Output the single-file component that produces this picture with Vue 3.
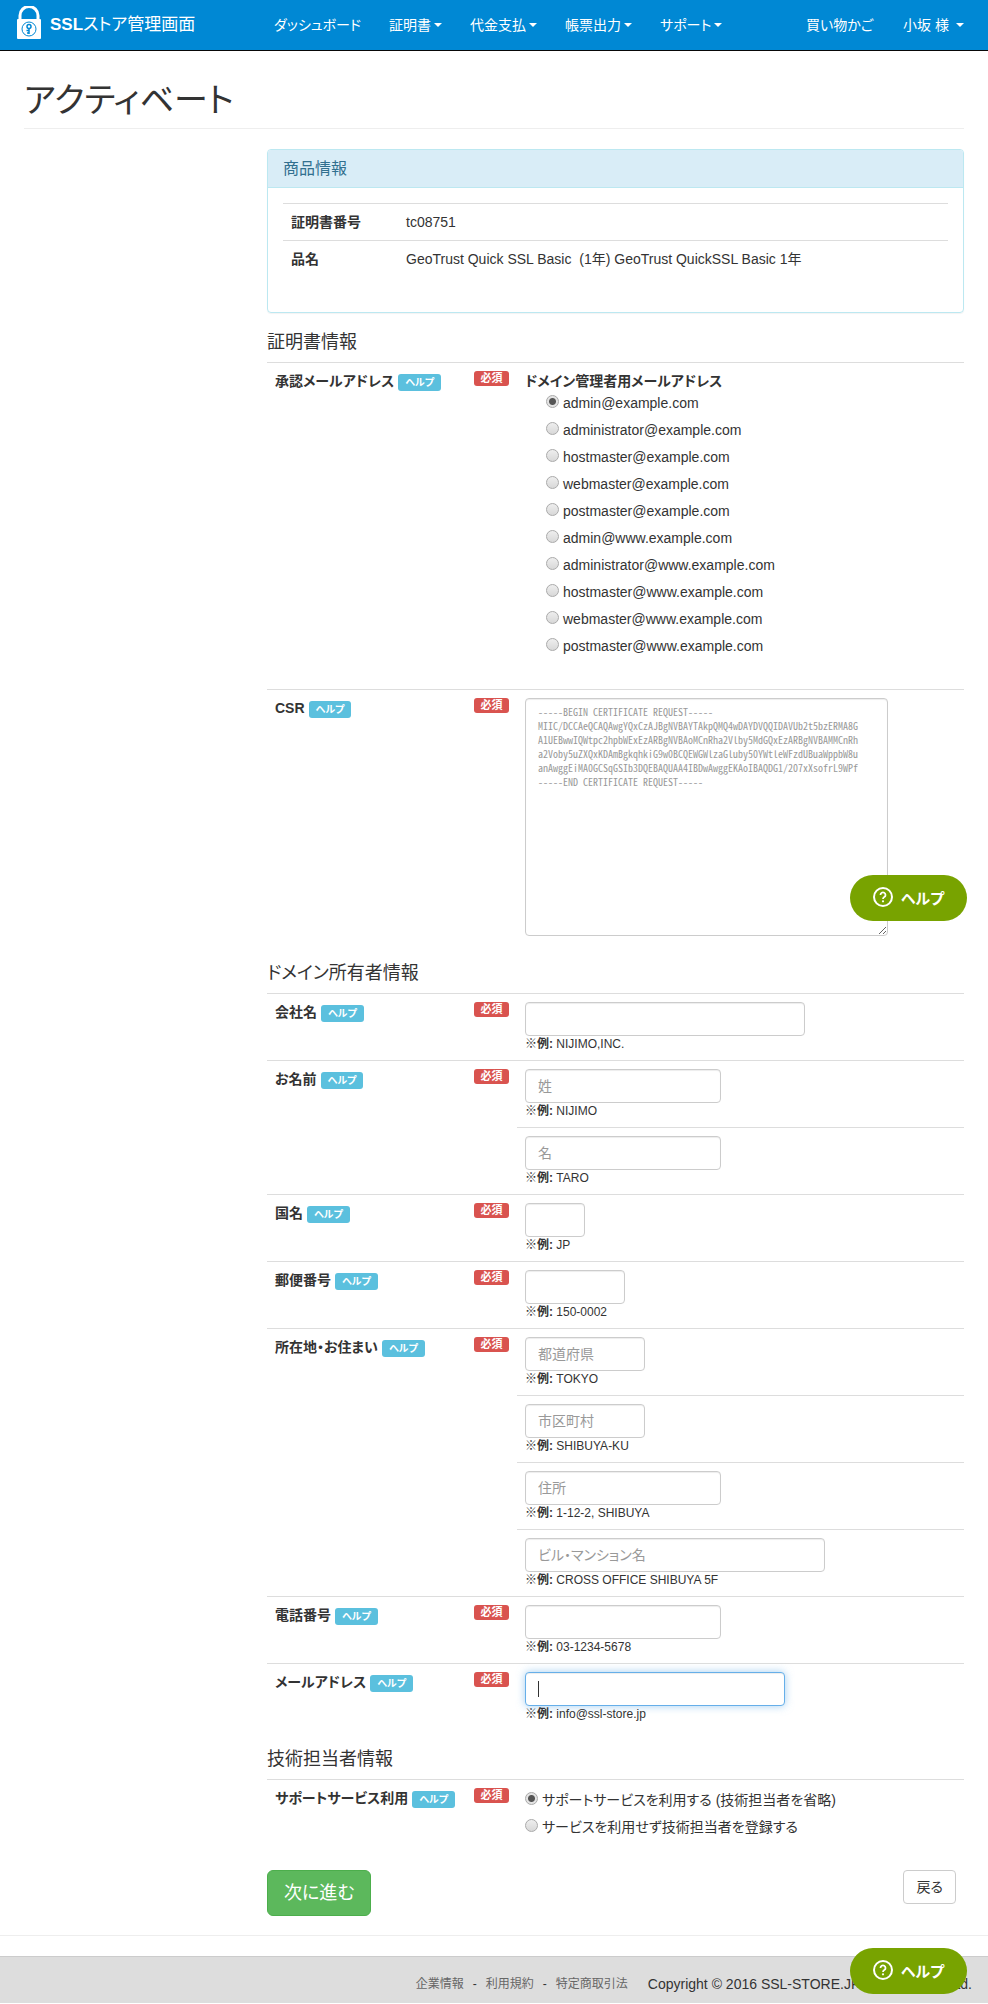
<template>
  <div class="page">
    <header class="navbar">
      <a class="brand" href="#">
        <svg class="brand-icon" width="26" height="34" viewBox="0 0 26 34" aria-hidden="true">
          <path d="M4 14V9.500a9 9 0 0 1 18 0V14" fill="none" stroke="#fff" stroke-width="3" />
          <rect x="1" y="13" width="24" height="20" rx="1" fill="#fff" />
          <circle cx="13" cy="23" r="7" fill="none" stroke="#0088d4" stroke-width="1" />
          <circle cx="13" cy="20.500" r="2" fill="none" stroke="#0088d4" stroke-width="1.500" />
          <path d="M13 22.500V28M13 24.500h-2.500M13 27h-2" fill="none" stroke="#0088d4" stroke-width="1.500" />
        </svg>
        <span><b>SSL</b>ストア管理画面</span>
      </a>
      <nav class="nav">
        <a v-for="item in mainNav" :key="item.text" href="#" class="nav-link">
          {{ item.text }}<i v-if="item.menu" class="caret"></i>
        </a>
      </nav>
      <nav class="nav nav-right">
        <a href="#" class="nav-link">買い物かご</a>
        <a href="#" class="nav-link user">小坂 様<i class="caret"></i></a>
      </nav>
    </header>

    <main class="container">
      <h1>アクティベート</h1>

      <form class="content" @submit.prevent>
        <section class="panel">
          <h3 class="panel-heading">商品情報</h3>
          <div class="panel-body">
            <table class="table product">
              <tbody>
                <tr>
                  <th scope="row">証明書番号</th>
                  <td>tc08751</td>
                </tr>
                <tr>
                  <th scope="row">品名</th>
                  <td>GeoTrust Quick SSL Basic&nbsp; (1年) GeoTrust QuickSSL Basic 1年</td>
                </tr>
              </tbody>
            </table>
          </div>
        </section>

        <h4>証明書情報</h4>
        <table class="table">
          <tbody>
            <tr>
              <th scope="row" class="col-label">
                <div class="label-line">承認メールアドレス<a href="#" class="help">ヘルプ</a></div>
              </th>
              <td class="col-required"><span class="required">必須</span></td>
              <td>
                <strong id="approver">ドメイン管理者用メールアドレス</strong>
                <div class="radios approver" role="radiogroup" aria-labelledby="approver">
                  <label v-for="mail in approverMails" :key="mail" class="radio">
                    <input v-model="approver" type="radio" name="approver" :value="mail" />{{ mail }}
                  </label>
                </div>
              </td>
            </tr>
            <tr>
              <th scope="row" class="col-label">
                <div class="label-line"><label for="csr">CSR</label><a href="#" class="help">ヘルプ</a></div>
              </th>
              <td class="col-required"><span class="required">必須</span></td>
              <td class="csr-cell">
                <textarea id="csr" class="control csr" :placeholder="csrSample"></textarea>
                <button type="button" class="help-widget">
                  <svg width="20" height="20" viewBox="0 0 20 20" aria-hidden="true">
                    <circle cx="10" cy="10" r="9" fill="none" stroke="#fff" stroke-width="2" />
                    <path d="M7.500 8a2.500 2.500 0 1 1 3.800 2.100c-.9.600-1.300 1-1.300 1.900" fill="none" stroke="#fff" stroke-width="1.800" />
                    <circle cx="10" cy="14.300" r="1.100" fill="#fff" />
                  </svg>
                  ヘルプ
                </button>
              </td>
            </tr>
          </tbody>
        </table>

        <h4>ドメイン所有者情報</h4>
        <table class="table">
          <tbody>
            <template v-for="group in ownerGroups" :key="group.label">
              <tr v-for="(field, i) in group.fields" :key="field.id">
                <th v-if="i === 0" scope="row" class="col-label" :rowspan="group.fields.length">
                  <div class="label-line">
                    <label :for="field.id">{{ group.label }}</label><a href="#" class="help">ヘルプ</a>
                  </div>
                </th>
                <td v-if="i === 0" class="col-required" :rowspan="group.fields.length">
                  <span class="required">必須</span>
                </td>
                <td>
                  <input
                    :id="field.id"
                    v-model="owner[field.id]"
                    :type="field.type || 'text'"
                    class="control"
                    :class="[field.size, { active: field.id === activeField && !owner[field.id] }]"
                    :placeholder="field.placeholder"
                    :aria-label="field.placeholder"
                    @focus="activeField = field.id"
                  />
                  <p class="example"><b>※例:</b> {{ field.example }}</p>
                </td>
              </tr>
            </template>
          </tbody>
        </table>

        <h4>技術担当者情報</h4>
        <table class="table">
          <tbody>
            <tr>
              <th scope="row" class="col-label">
                <div class="label-line"><span id="support">サポートサービス利用</span><a href="#" class="help">ヘルプ</a></div>
              </th>
              <td class="col-required"><span class="required">必須</span></td>
              <td>
                <div class="radios" role="radiogroup" aria-labelledby="support">
                  <label class="radio">
                    <input v-model="support" type="radio" name="support" value="use" />サポートサービスを利用する (技術担当者を省略)
                  </label>
                  <label class="radio">
                    <input v-model="support" type="radio" name="support" value="none" />サービスを利用せず技術担当者を登録する
                  </label>
                </div>
              </td>
            </tr>
          </tbody>
        </table>

        <div class="actions">
          <button type="submit" class="btn btn-next">次に進む</button>
          <button type="button" class="btn btn-back">戻る</button>
        </div>
      </form>
    </main>

    <footer class="footer">
      <div class="footer-links">
        <a href="#">企業情報</a>
        <span>-</span>
        <a href="#">利用規約</a>
        <span>-</span>
        <a href="#">特定商取引法</a>
      </div>
      <span>Copyright © 2016 SSL-STORE.JP NIJIMO, Co., Ltd.</span>
    </footer>

    <button type="button" class="help-widget floating">
      <svg width="20" height="20" viewBox="0 0 20 20" aria-hidden="true">
        <circle cx="10" cy="10" r="9" fill="none" stroke="#fff" stroke-width="2" />
        <path d="M7.500 8a2.500 2.500 0 1 1 3.800 2.100c-.9.600-1.300 1-1.300 1.900" fill="none" stroke="#fff" stroke-width="1.800" />
        <circle cx="10" cy="14.300" r="1.100" fill="#fff" />
      </svg>
      ヘルプ
    </button>
  </div>
</template>

<script setup>
import { ref, reactive } from 'vue';

const mainNav = [
  { text: 'ダッシュボード' },
  { text: '証明書', menu: true },
  { text: '代金支払', menu: true },
  { text: '帳票出力', menu: true },
  { text: 'サポート', menu: true },
];

// 承認メールアドレスの候補
const accounts = ['admin', 'administrator', 'hostmaster', 'webmaster', 'postmaster'];
const approverMails = ['example.com', 'www.example.com'].flatMap((domain) =>
  accounts.map((account) => `${account}@${domain}`)
);
const approver = ref('admin@example.com');

const csrSample = [
  '-----BEGIN CERTIFICATE REQUEST-----',
  'MIIC/DCCAeQCAQAwgYQxCzAJBgNVBAYTAkpQMQ4wDAYDVQQIDAVUb2t5bzERMA8G',
  'A1UEBwwIQWtpc2hpbWExEzARBgNVBAoMCnRha2Vlby5MdGQxEzARBgNVBAMMCnRh',
  'a2Voby5uZXQxKDAmBgkqhkiG9w0BCQEWGWlzaGluby50YWtleWFzdUBuaWppbW8u',
  'anAwggEiMA0GCSqGSIb3DQEBAQUAA4IBDwAwggEKAoIBAQDG1/207xXsofrL9WPf',
  '-----END CERTIFICATE REQUEST-----',
].join('\n');

// ドメイン所有者の入力項目
const ownerGroups = [
  { label: '会社名', fields: [{ id: 'company', size: 'w-280', example: 'NIJIMO,INC.' }] },
  {
    label: 'お名前',
    fields: [
      { id: 'lastName', size: 'w-196', placeholder: '姓', example: 'NIJIMO' },
      { id: 'firstName', size: 'w-196', placeholder: '名', example: 'TARO' },
    ],
  },
  { label: '国名', fields: [{ id: 'country', size: 'w-60', example: 'JP' }] },
  { label: '郵便番号', fields: [{ id: 'zip', size: 'w-100', example: '150-0002' }] },
  {
    label: '所在地・お住まい',
    fields: [
      { id: 'prefecture', size: 'w-120', placeholder: '都道府県', example: 'TOKYO' },
      { id: 'city', size: 'w-120', placeholder: '市区町村', example: 'SHIBUYA-KU' },
      { id: 'street', size: 'w-196', placeholder: '住所', example: '1-12-2, SHIBUYA' },
      { id: 'building', size: 'w-300', placeholder: 'ビル・マンション名', example: 'CROSS OFFICE SHIBUYA 5F' },
    ],
  },
  { label: '電話番号', fields: [{ id: 'tel', type: 'tel', size: 'w-196', example: '03-1234-5678' }] },
  { label: 'メールアドレス', fields: [{ id: 'email', type: 'email', size: 'w-260', example: 'info@ssl-store.jp' }] },
];
const owner = reactive({});
const activeField = ref('email');
const support = ref('use');
</script>

<style>
body {
  margin: 0;
  background: #fff;
}
</style>

<style scoped>
.page {
  font-family: 'Liberation Sans', 'Noto Sans CJK JP', sans-serif;
  font-size: 14px;
  line-height: 20px;
  color: #333;
  font-feature-settings: 'palt';
}

.page * {
  box-sizing: border-box;
}

button,
input {
  font-family: inherit;
  font-feature-settings: inherit;
}

/* ナビゲーション */
.navbar {
  display: flex;
  align-items: center;
  height: 51px;
  padding: 0 9px 0 16px;
  background: #0088d4;
  border-bottom: 1px solid #080808;
}

.navbar a {
  color: #fff;
  text-decoration: none;
  white-space: nowrap;
}

.brand {
  display: flex;
  align-items: center;
  gap: 8px;
  width: 244px;
  font-size: 17px;
}

.brand-icon {
  margin-bottom: 4px;
}

.nav {
  display: flex;
}

.nav-link {
  display: flex;
  align-items: center;
  padding: 15px 14px;
}

.nav-right {
  margin-left: auto;
}

.nav-right .nav-link {
  padding: 15px;
}

.caret {
  margin-left: 3px;
  border-top: 4px solid #fff;
  border-right: 4px solid transparent;
  border-left: 4px solid transparent;
}

.user .caret {
  margin-left: 7px;
}

/* 本文 */
.container {
  padding: 0 24px;
}

h1 {
  margin: 29px 0 20px;
  padding-bottom: 8px;
  font-size: 34px;
  font-weight: 400;
  line-height: 40px;
  border-bottom: 1px solid #eee;
}

.content {
  padding-left: 243px;
}

.panel {
  margin-bottom: 20px;
  border: 1px solid #bce8f1;
  border-radius: 4px;
  box-shadow: 0 1px 1px rgba(0, 0, 0, 0.05);
}

.panel-heading {
  margin: 0;
  padding: 10px 15px 9px;
  font-size: 16px;
  font-weight: 400;
  line-height: 18px;
  color: #31708f;
  background: #d9edf7;
  border-bottom: 1px solid #bce8f1;
  border-radius: 3px 3px 0 0;
}

.panel-body {
  padding: 15px;
}

h4 {
  margin: 20px 0 10px;
  font-size: 18px;
  font-weight: 400;
  line-height: 19px;
}

.table {
  width: 100%;
  margin-bottom: 20px;
  border-spacing: 0;
}

.table th,
.table td {
  padding: 8px;
  text-align: left;
  vertical-align: top;
  border-top: 1px solid #ddd;
}

.product th {
  width: 115px;
}

.col-label {
  width: 199px;
}

.col-required {
  width: 51px;
}

.label-line {
  display: flex;
  align-items: flex-start;
  gap: 4px;
  white-space: nowrap;
}

.help,
.required {
  display: block;
  font-weight: 700;
  color: #fff;
  white-space: nowrap;
  border-radius: 3px;
}

.help {
  margin-top: 3px;
  padding: 0 7px;
  font-size: 10px;
  line-height: 17px;
  text-decoration: none;
  background: #5bc0de;
}

.required {
  padding: 0 6px;
  font-size: 11px;
  line-height: 15px;
  text-align: center;
  background: #d9534f;
}

.radios {
  display: flex;
  flex-direction: column;
  gap: 7px;
  padding-top: 2px;
}

.approver {
  padding: 2px 0 25px 21px;
}

.radio {
  display: flex;
  gap: 4px;
}

.radio input {
  flex: none;
  width: 13px;
  height: 13px;
  margin: 2px 0 0;
  appearance: none;
  background: linear-gradient(#eee, #d8d8d8);
  border: 1px solid #aaa;
  border-radius: 50%;
}

.radio input:checked {
  background: radial-gradient(circle, #555 0 3px, #e4e4e4 4px);
}

/* 入力欄 */
.control {
  display: block;
  height: 34px;
  padding: 6px 12px;
  font-size: 14px;
  color: #555;
  background: #fff;
  border: 1px solid #ccc;
  border-radius: 4px;
  outline: none;
  box-shadow: inset 0 1px 1px rgba(0, 0, 0, 0.075);
}

.control::placeholder {
  color: #999;
}

.control:focus,
.control.active {
  border-color: #66afe9;
  box-shadow: inset 0 1px 1px rgba(0, 0, 0, 0.075), 0 0 8px rgba(102, 175, 233, 0.6);
}

.control.active {
  caret-color: transparent;
  background: linear-gradient(#333, #333) 12px center / 1px 16px no-repeat #fff;
}

.csr {
  width: 363px;
  height: 238px;
  font-family: 'Noto Sans Mono CJK JP', 'Liberation Mono', monospace;
  font-size: 10px;
  font-feature-settings: normal;
  line-height: 14px;
}

.w-60 { width: 60px; }
.w-100 { width: 100px; }
.w-120 { width: 120px; }
.w-196 { width: 196px; }
.w-260 { width: 260px; }
.w-280 { width: 280px; }
.w-300 { width: 300px; }

.example {
  margin: 0;
  font-size: 12px;
  line-height: 16px;
}

.actions {
  display: flex;
  align-items: flex-start;
  justify-content: space-between;
  padding: 5px 8px 20px 0;
}

.btn {
  padding: 6px 12px;
  font-size: 14px;
  line-height: 20px;
  border: 1px solid #ccc;
  border-radius: 4px;
}

.btn-next {
  padding: 10px 16px;
  font-size: 18px;
  line-height: 24px;
  color: #fff;
  background: #5cb85c;
  border-color: #4cae4c;
  border-radius: 6px;
}

.btn-back {
  color: #333;
  background: #fff;
}

/* ヘルプボタン */
.help-widget {
  display: flex;
  align-items: center;
  justify-content: center;
  gap: 8px;
  width: 117px;
  height: 46px;
  padding: 0 0 2px;
  font-size: 15px;
  font-weight: 700;
  color: #fff;
  background: #78a300;
  border: 0;
  border-radius: 23px;
}

.csr-cell {
  position: relative;
}

.csr-cell .help-widget {
  position: absolute;
  right: -3px;
  bottom: 23px;
}

.floating {
  position: fixed;
  right: 21px;
  bottom: 10px;
}

/* フッター */
.footer {
  display: flex;
  justify-content: flex-end;
  gap: 20px;
  margin-top: 20px;
  padding: 17px 16px 9px;
  background: #ddd;
  border-top: 1px solid #ccc;
  box-shadow: 0 -20px 0 #fff, 0 -21px 0 #eee;
}

.footer-links {
  display: flex;
  gap: 9px;
  font-size: 12px;
}

.footer-links a {
  color: #666;
  text-decoration: none;
}
</style>
